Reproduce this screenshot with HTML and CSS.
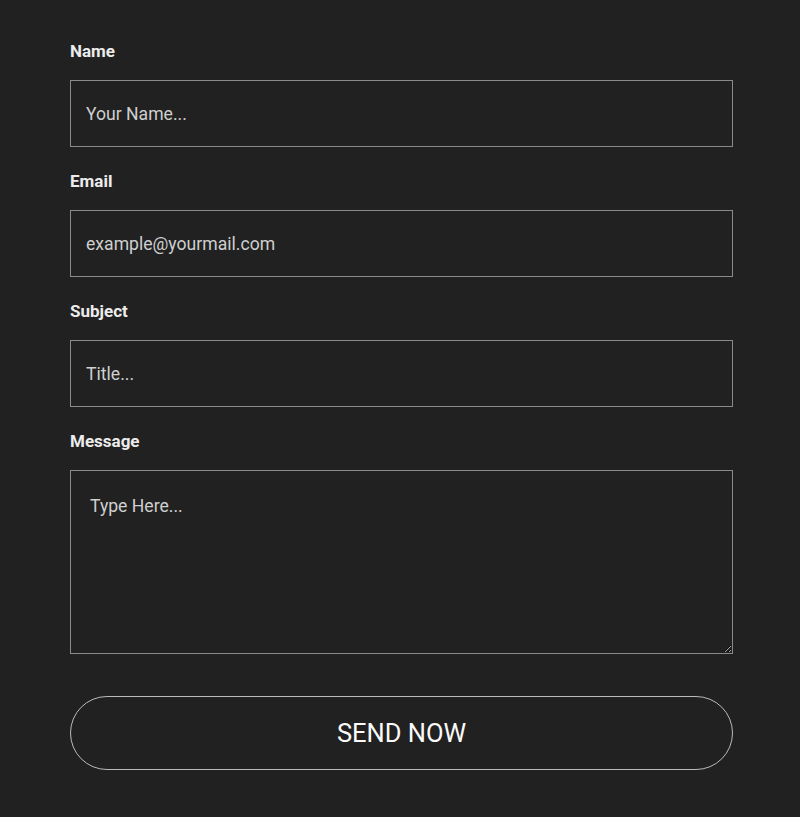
FILE: index.html
```html
<!DOCTYPE html>
<html lang="en">
<head>
    <meta charset="UTF-8">
    <meta name="viewport" content="width=device-width, initial-scale=1.0">
    <title>Contact</title>
    <link rel="stylesheet" href="styles.css">
</head>
<body>
    <form class="contact-form">
        <div class="field">
            <label for="name">Name</label>
            <input type="text" id="name" placeholder="Your Name...">
        </div>
        <div class="field">
            <label for="email">Email</label>
            <input type="text" id="email" placeholder="example@yourmail.com">
        </div>
        <div class="field">
            <label for="subject">Subject</label>
            <input type="text" id="subject" placeholder="Title...">
        </div>
        <div class="field">
            <label for="message">Message</label>
            <textarea id="message" placeholder="Type Here..."></textarea>
        </div>
        <button type="submit" class="send-btn">SEND NOW</button>
    </form>
</body>
</html>
```
FILE: styles.css
```css
body {
    font-family: Roboto, "Liberation Sans", sans-serif;
    margin: 0;
    padding: 0;
    background-color: #212121;
    color: #eee;
}
.contact-form {
    width: 663px;
    margin-left: 70px;
    padding-top: 41px;
    display: flex;
    flex-direction: column;
}
.field {
    display: flex;
    flex-direction: column;
    margin-bottom: 24px;
}
label {
    font-size: 17px;
    font-weight: 700;
    line-height: 20px;
    color: #ececec;
    margin-bottom: 19px;
}
input[type="text"], textarea {
    box-sizing: border-box;
    width: 100%;
    height: 67px;
    padding: 0 15px;
    background-color: #212121;
    border: 1px solid #8a8a8a;
    border-radius: 0;
    color: #ddd;
    font-family: Roboto, "Liberation Sans", sans-serif;
    font-size: 17.6px;
    outline: none;
}
textarea {
    height: 184px;
    padding: 25px 19px;
    resize: vertical;
}
input::placeholder, textarea::placeholder {
    color: #cfcfcf;
}
.send-btn {
    margin-top: 18px;
    height: 74px;
    background-color: #212121;
    border: 1px solid #bbb;
    border-radius: 37px;
    color: #fafafa;
    font-family: Roboto, "Liberation Sans", sans-serif;
    font-size: 25.5px;
    cursor: pointer;
}
```
